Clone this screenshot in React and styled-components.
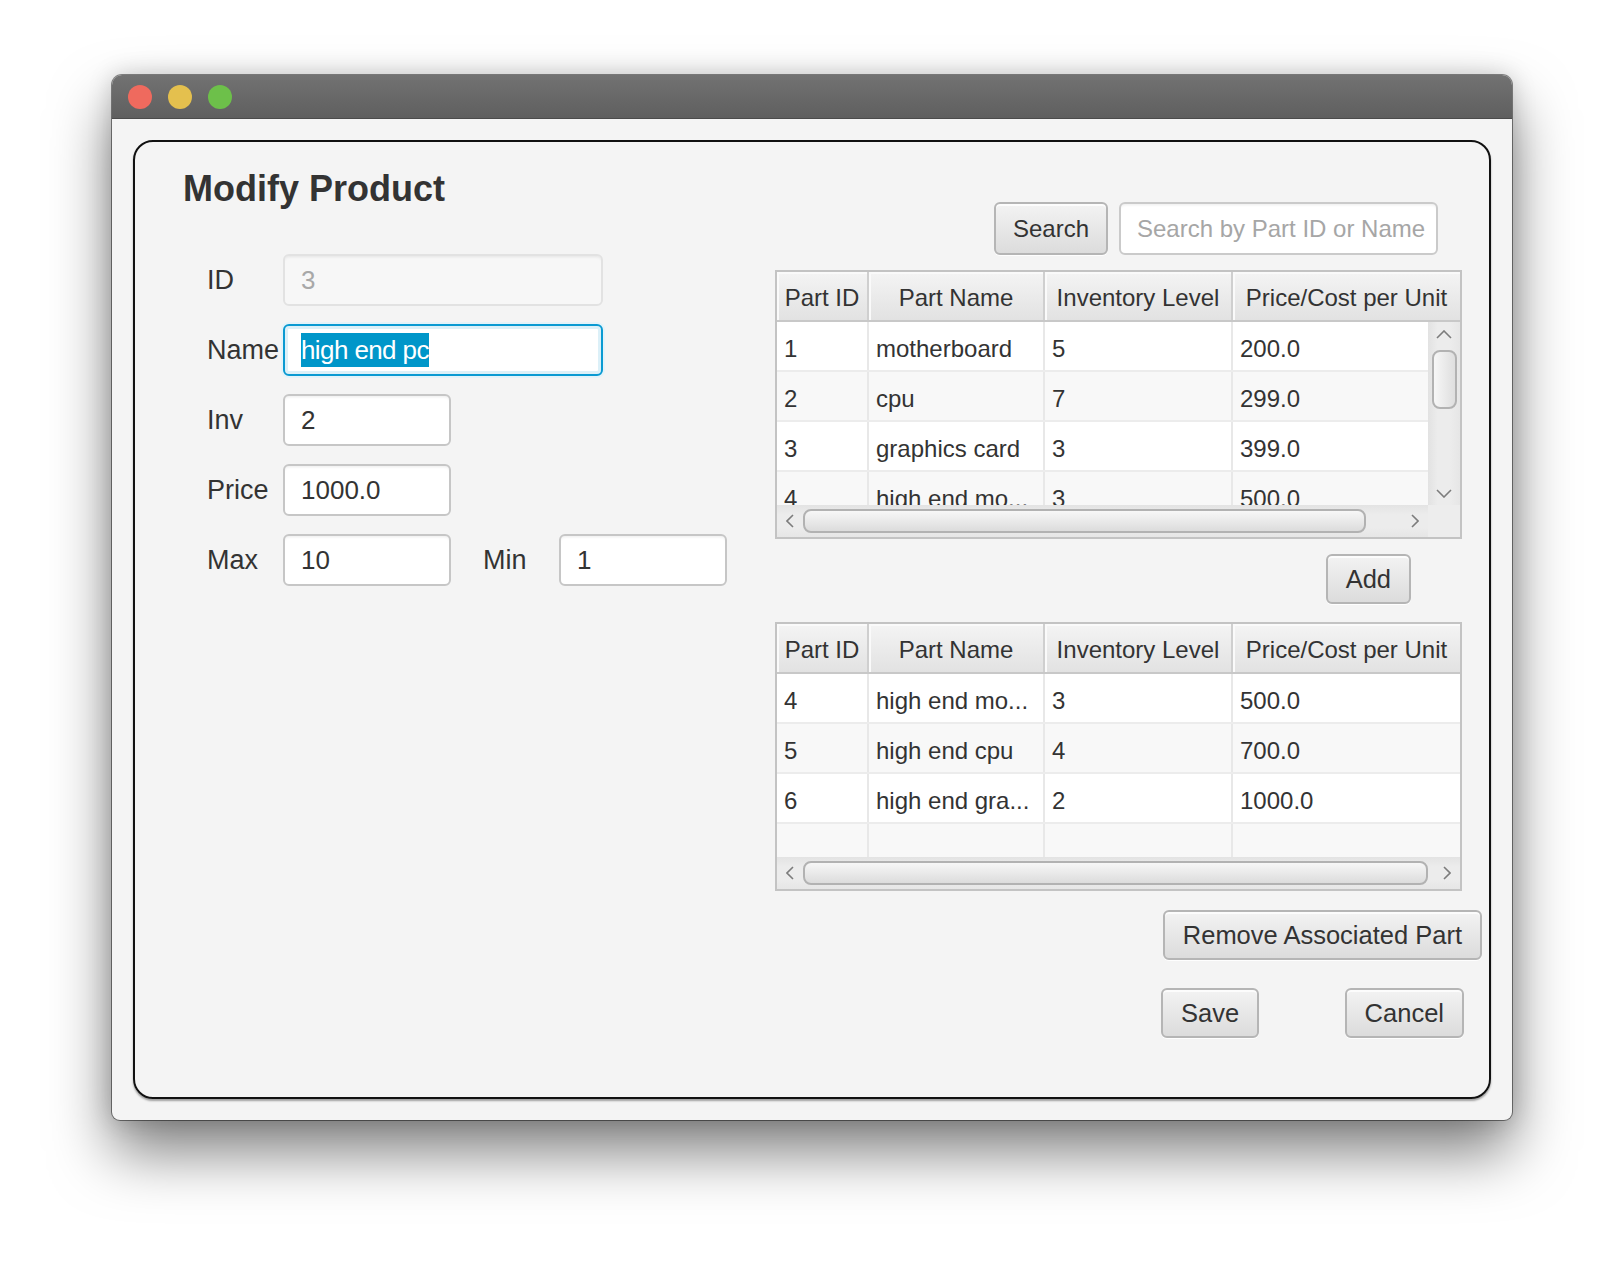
import React from 'react'
import styled, { createGlobalStyle } from 'styled-components'

const GlobalStyle = createGlobalStyle`
  html, body {
    margin: 0;
    padding: 0;
    background: #fff;
  }
  body {
    font-family: "Liberation Sans", Arial, sans-serif;
    color: #333;
  }
  * { box-sizing: border-box; }
`

const parts = [
  { id: 1, name: 'motherboard', inv: 5, price: '200.0' },
  { id: 2, name: 'cpu', inv: 7, price: '299.0' },
  { id: 3, name: 'graphics card', inv: 3, price: '399.0' },
  { id: 4, name: 'high end mo...', inv: 3, price: '500.0' },
]

const associated = [
  { id: 4, name: 'high end mo...', inv: 3, price: '500.0' },
  { id: 5, name: 'high end cpu', inv: 4, price: '700.0' },
  { id: 6, name: 'high end gra...', inv: 2, price: '1000.0' },
  null,
]

const columns = ['Part ID', 'Part Name', 'Inventory Level', 'Price/Cost per Unit']

function App() {
  return (
    <Page>
      <GlobalStyle />
      <Window>
        <TitleBar>
          <Light $color="#ef6a5e" />
          <Light $color="#e4c04e" />
          <Light $color="#6dc04a" />
        </TitleBar>

        <Content>
          <Panel>
            <LeftCol>
              <Title>Modify Product</Title>
              <Form>
                <FormRow>
                  <Label>ID</Label>
                  <Field $wide $disabled>3</Field>
                </FormRow>
                <FormRow>
                  <Label>Name</Label>
                  <Field $wide $focused><Selected>high end pc</Selected></Field>
                </FormRow>
                <FormRow>
                  <Label>Inv</Label>
                  <Field>2</Field>
                </FormRow>
                <FormRow>
                  <Label>Price</Label>
                  <Field>1000.0</Field>
                </FormRow>
                <FormRow>
                  <Label>Max</Label>
                  <Field>10</Field>
                  <Label $gap>Min</Label>
                  <Field>1</Field>
                </FormRow>
              </Form>
            </LeftCol>

            <RightCol>
              <SearchRow>
                <Button $small>Search</Button>
                <SearchField>Search by Part ID or Name</SearchField>
              </SearchRow>

              <PartTable rows={parts} vscroll thumb="94%" />

              <Button $right={71} $top={15}>Add</Button>

              <PartTable rows={associated} thumb="99%" top={18} />

              <Button $right={0} $top={19}>Remove Associated Part</Button>

              <ActionRow>
                <Button>Save</Button>
                <Button>Cancel</Button>
              </ActionRow>
            </RightCol>
          </Panel>
        </Content>
      </Window>
    </Page>
  )
}

function Chevron({ dir }) {
  const pts = {
    up: '1,8 8,1 15,8',
    down: '1,1 8,8 15,1',
    left: '7,1 1,7 7,13',
    right: '1,1 7,7 1,13',
  }[dir]
  const vertical = dir === 'up' || dir === 'down'
  return (
    <svg width={vertical ? 16 : 8} height={vertical ? 9 : 14} viewBox={vertical ? '0 0 16 9' : '0 0 8 14'}>
      <polyline points={pts} fill="none" stroke="#7c7c7c" strokeWidth="1.6" />
    </svg>
  )
}

function PartTable({ rows, vscroll, thumb, top }) {
  return (
    <TableBox $top={top}>
      <HeaderRow>
        {columns.map((c) => <HeaderCell key={c}>{c}</HeaderCell>)}
      </HeaderRow>
      <Body>
        <Rows>
          {rows.map((r, i) => (
            <Row key={i} $alt={i % 2 === 1}>
              <Cell>{r ? r.id : ''}</Cell>
              <Cell>{r ? r.name : ''}</Cell>
              <Cell>{r ? r.inv : ''}</Cell>
              <Cell>{r ? r.price : ''}</Cell>
            </Row>
          ))}
        </Rows>
        {vscroll && (
          <VScroll>
            <ArrowBox $v><Chevron dir="up" /></ArrowBox>
            <VThumb />
            <Spacer />
            <ArrowBox $v><Chevron dir="down" /></ArrowBox>
          </VScroll>
        )}
      </Body>
      <HScroll>
        <ArrowBox><Chevron dir="left" /></ArrowBox>
        <Track>
          <HThumb style={{ width: thumb }} />
        </Track>
        <ArrowBox><Chevron dir="right" /></ArrowBox>
        {vscroll && <Corner />}
      </HScroll>
    </TableBox>
  )
}

const Page = styled.div`
  width: 1624px;
  height: 1268px;
  padding: 75px 0 0 112px;
  overflow: hidden;
`

const Window = styled.div`
  width: 1400px;
  height: 1045px;
  display: flex;
  flex-direction: column;
  background: #f4f4f4;
  border-radius: 10px 10px 8px 8px;
  overflow: hidden;
  box-shadow:
    0 0 0 1px rgba(0, 0, 0, 0.45),
    0 32px 60px rgba(0, 0, 0, 0.5),
    0 0 24px rgba(0, 0, 0, 0.18);
`

const TitleBar = styled.div`
  height: 44px;
  flex: none;
  display: flex;
  align-items: center;
  gap: 16px;
  padding-left: 16px;
  background: linear-gradient(#727272, #5f5f5f);
  border-bottom: 1px solid #4b4b4b;
`

const Light = styled.span`
  width: 24px;
  height: 24px;
  border-radius: 50%;
  background: ${(p) => p.$color};
`

const Content = styled.div`
  flex: 1;
  display: flex;
  padding: 21px 21px 21px 21px;
`

const Panel = styled.div`
  flex: 1;
  display: grid;
  grid-template-columns: 640px 707px;
  align-items: start;
  border: 2px solid #111;
  border-radius: 20px;
  box-shadow: 0 2px 2px rgba(0, 0, 0, 0.35);
`

const LeftCol = styled.div`
  padding-top: 26px;
`

const Title = styled.h1`
  margin: 0 0 0 48px;
  font-size: 36px;
  line-height: 42px;
  font-weight: bold;
  color: #333;
`

const Form = styled.div`
  margin-top: 44px;
  padding-left: 72px;
  display: flex;
  flex-direction: column;
  gap: 18px;
`

const FormRow = styled.div`
  height: 52px;
  display: flex;
  align-items: center;
`

const Label = styled.div`
  width: 76px;
  margin-left: ${(p) => (p.$gap ? '32px' : '0')};
  font-size: 27px;
  color: #333;
  white-space: nowrap;
`

const Field = styled.div`
  width: ${(p) => (p.$wide ? '320px' : '168px')};
  height: 52px;
  display: flex;
  align-items: center;
  padding: 0 16px;
  font-size: 26px;
  color: ${(p) => (p.$disabled ? '#a8a8a8' : '#333')};
  background: ${(p) => (p.$disabled ? '#f7f7f7' : '#fff')};
  border: 2px solid ${(p) => (p.$focused ? '#0a9ad2' : p.$disabled ? '#e2e2e2' : '#c6c6c6')};
  border-radius: 6px;
  box-shadow: ${(p) =>
    p.$focused
      ? 'inset 0 0 0 3px #dcf0f8, 0 0 0 2px #e4f3f9'
      : 'inset 0 3px 3px -2px rgba(0, 0, 0, 0.08)'};
`

const Selected = styled.span`
  display: inline-block;
  line-height: 34px;
  letter-spacing: -0.6px;
  background: #0096c9;
  color: #fff;
  white-space: nowrap;
`

const RightCol = styled.div`
  display: flex;
  flex-direction: column;
  align-items: flex-start;
`

const SearchRow = styled.div`
  align-self: stretch;
  margin-top: 60px;
  padding-right: 44px;
  display: flex;
  justify-content: flex-end;
  gap: 11px;
`

const Button = styled.button`
  height: ${(p) => (p.$small ? '53px' : '50px')};
  padding: 0 ${(p) => (p.$small ? '17px' : '18px')};
  margin-top: ${(p) => (p.$top ? `${p.$top}px` : '0')};
  align-self: ${(p) => (p.$right !== undefined ? 'flex-end' : 'auto')};
  margin-right: ${(p) => (p.$right ? `${p.$right}px` : '0')};
  font-family: "Liberation Sans", Arial, sans-serif;
  font-size: ${(p) => (p.$small ? '24px' : '25.5px')};
  color: #333;
  background: linear-gradient(#f3f3f3, #dcdcdc);
  border: 2px solid #b5b5b5;
  border-radius: 6px;
  box-shadow: inset 0 2px 0 rgba(255, 255, 255, 0.75), 0 1px 0 rgba(255, 255, 255, 0.9);
`

const SearchField = styled.div`
  width: 319px;
  height: 53px;
  display: flex;
  align-items: center;
  padding: 0 16px;
  font-size: 24px;
  color: #a6a6a6;
  background: #fff;
  border: 2px solid #cacaca;
  border-radius: 6px;
  box-shadow: inset 0 3px 3px -2px rgba(0, 0, 0, 0.08);
  white-space: nowrap;
`

const ActionRow = styled.div`
  align-self: flex-end;
  width: 303px;
  margin: 28px 18px 0 0;
  display: flex;
  justify-content: space-between;
`

const TableBox = styled.div`
  width: 687px;
  margin-top: ${(p) => (p.$top ? `${p.$top}px` : '15px')};
  display: flex;
  flex-direction: column;
  border: 2px solid #c3c3c3;
  background: #fff;
  font-size: 24px;
  color: #333;
`

const cols = '92px 176px 188px 1fr'

const HeaderRow = styled.div`
  display: grid;
  grid-template-columns: ${cols};
  height: 50px;
  border-bottom: 2px solid #c8c8c8;
`

const HeaderCell = styled.div`
  display: flex;
  align-items: center;
  justify-content: center;
  padding-top: 3px;
  white-space: nowrap;
  background: linear-gradient(#f4f4f4, #e2e2e2);
  border-right: 2px solid #cfcfcf;
  box-shadow: inset 2px 2px 0 #fafafa;
  &:last-child { border-right: none; }
`

const Body = styled.div`
  height: 183px;
  display: flex;
  overflow: hidden;
`

const Rows = styled.div`
  flex: 1;
  min-width: 0;
`

const Row = styled.div`
  display: grid;
  grid-template-columns: ${cols};
  height: 50px;
  background: ${(p) => (p.$alt ? '#f8f8f8' : '#fff')};
  border-bottom: 2px solid #ececec;
`

const Cell = styled.div`
  display: flex;
  align-items: center;
  padding: 5px 0 0 7px;
  white-space: nowrap;
  overflow: hidden;
  border-right: 2px solid #e8e8e8;
  &:last-child { border-right: none; }
`

const VScroll = styled.div`
  width: 32px;
  flex: none;
  display: flex;
  flex-direction: column;
  align-items: center;
  background: linear-gradient(to right, #e2e2e2, #ececec 30%, #ececec 70%, #e6e6e6);
`

const ArrowBox = styled.div`
  width: ${(p) => (p.$v ? '32px' : '26px')};
  height: ${(p) => (p.$v ? '24px' : '32px')};
  flex: none;
  display: flex;
  align-items: center;
  justify-content: center;
`

const VThumb = styled.div`
  width: 25px;
  height: 59px;
  margin-top: 4px;
  border: 2px solid #b2b2b2;
  border-radius: 8px;
  background: linear-gradient(to right, #f7f7f7, #dedede);
`

const Spacer = styled.div`
  flex: 1;
`

const HScroll = styled.div`
  height: 32px;
  display: flex;
  align-items: center;
  background: linear-gradient(#e3e3e3, #ececec 30%, #ececec 70%, #e6e6e6);
`

const Track = styled.div`
  flex: 1;
  height: 24px;
  display: flex;
`

const HThumb = styled.div`
  height: 24px;
  border: 2px solid #b2b2b2;
  border-radius: 8px;
  background: linear-gradient(#f7f7f7, #dcdcdc);
`

const Corner = styled.div`
  width: 32px;
  height: 32px;
  background: #ededed;
`

export default App
